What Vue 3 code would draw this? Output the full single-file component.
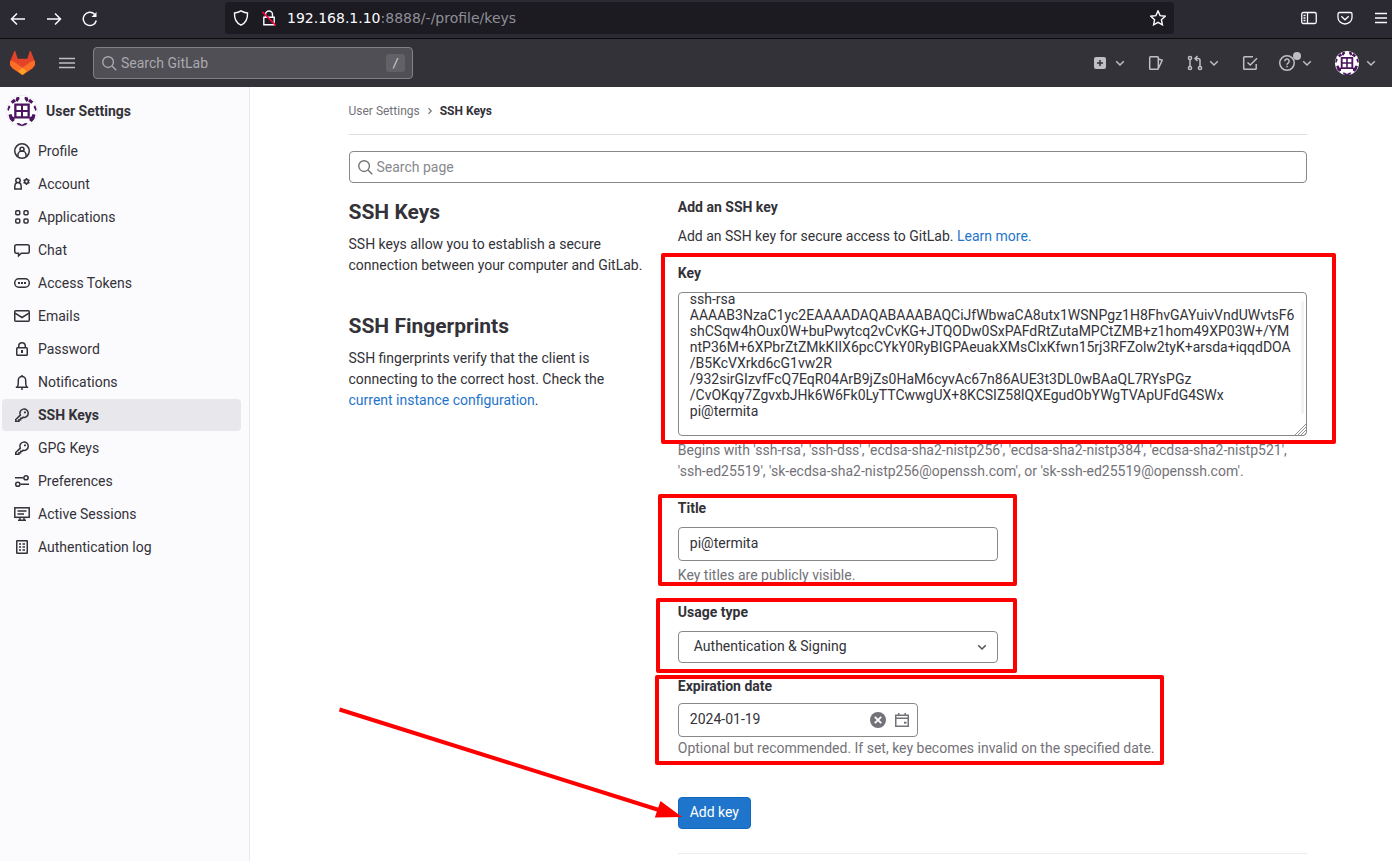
<script setup>
const items = [
  { label: 'Profile', icon: '<circle cx="8" cy="8" r="7.25"/><circle cx="8" cy="6.2" r="2"/><path d="M3.9 13.6V12.200a4.100 4.100 0 0 1 8.200 0v1.400"/>' },
  { label: 'Account', icon: '<circle cx="4" cy="4.500" r="2.200"/><path d="M2.900 6.500C1.300 7.400.8 8.700.8 10.200v2.900h6.400v-2.900c0-1.500-.5-2.800-2.100-3.700"/><circle cx="12.500" cy="5.500" r="1.900"/><path stroke-width="1.500" d="M12.500 2v1.500m0 4V9M9.500 3.800l1.400.8m3.200 1.800 1.400.8M9.500 7.200l1.400-.8m3.200-1.800 1.400-.8"/>' },
  { label: 'Applications', icon: '<rect x="1.750" y="1.750" width="4" height="4" rx="1"/><rect x="10" y="1.750" width="4" height="4" rx="1"/><rect x="1.750" y="9.900" width="4" height="4" rx="1"/><rect x="10" y="9.900" width="4" height="4" rx="1"/>' },
  { label: 'Chat', icon: '<path d="M2.500 2.750h11a1.750 1.750 0 0 1 1.750 1.750v5a1.750 1.750 0 0 1-1.750 1.750H7.300L4.500 13.800v-2.550h-2A1.750 1.750 0 0 1 .75 9.500v-5A1.750 1.750 0 0 1 2.500 2.750z"/>' },
  { label: 'Access Tokens', icon: '<rect x=".75" y="3.750" width="14.500" height="8.500" rx="4"/><path stroke-width="2" d="M4 8h2M7 8h2M10 8h2"/>' },
  { label: 'Emails', icon: '<rect x=".75" y="2.750" width="14.500" height="10.500" rx="1"/><path d="m1 5.200 7 4.300 7-4.300"/>' },
  { label: 'Password', icon: '<rect x="2.750" y="6.750" width="10.500" height="7.500" rx=".8"/><path d="M4.750 6.500V5a3.250 3.250 0 0 1 6.500 0v1.500"/><path stroke-width="2" d="M8 9v3"/>' },
  { label: 'Notifications', icon: '<path d="M1.800 13.250h12.400M3.300 13c.8-1 1-2.400 1-4.500V6.200a3.700 3.700 0 0 1 7.400 0v2.300c0 2.100.2 3.500 1 4.500"/><path d="M8 1v1.500M7 15h2"/>' },
  { label: 'SSH Keys', icon: 'key', active: true },
  { label: 'GPG Keys', icon: 'key' },
  { label: 'Preferences', icon: '<path d="M1 4.750h8.500M14.500 4.750H14M15 11.250H6.500"/><circle cx="12" cy="4.750" r="2.100"/><circle cx="3.800" cy="11.250" r="2.100"/>' },
  { label: 'Active Sessions', icon: '<rect x=".8" y="1.800" width="14.400" height="9.500"/><path d="M3.500 5h9M3.500 8h6.500M6 11.500V14M10 11.500V14M4 14.250h8"/>' },
  { label: 'Authentication log', icon: '<rect x="2.750" y="1.750" width="10.500" height="12.500" rx=".5"/><path d="M5 5h2M8.500 5h2.500M5 8h2M8.500 8h2.500M5 11h2M8.500 11h2.500"/>' },
]
const keyIcon = '<path d="M6.300 8.100 1.750 12.500v1.750h3.200v-1.500h1.700v-1.600h1.500l.7-.9a4.200 4.200 0 1 0-2.550-2.150z"/><path stroke-width="1.800" d="M10 5.300h1.900"/>'
const art = '<circle cx="15" cy="15" r="15" fill="#fff"/><g fill="#4b1560"><path fill-rule="evenodd" d="M7.200 7.500h15.600v15H7.200zM9.500 9.700v4.300h4.500V9.700zM16 9.700v4.300h4.500V9.700zM9.500 16v4.300h4.500V16zM16 16v4.300h4.500V16z"/><path d="M3.700 5.500 7 2.800l2 2.700-3.500 2.200zM9.200 1.500l3-.8.3 2.300-2.200 3-1.800-1.700zM26.300 5.500 23 2.800l-2 2.700 3.500 2.200zM20.800 1.500l-3-.8-.3 2.300 2.200 3 1.800-1.700zM.2 13.200l1.600-4 1.700 1.600-2.200 4.500zM29.800 13.200l-1.600-4-1.700 1.600 2.200 4.500zM1.500 18.700l3-.7 1 2.500 2.200.8-.2 3.300-2.300 1.300-2.600-3zM28.500 18.700l-3-.7-1 2.500-2.200.8.2 3.300 2.300 1.300 2.600-3zM9.500 27l3 .2 2.500 1.500 2.500-1.500 3-.2-1.500 2.300-2.500.6h-3l-2.500-.6z"/></g>'
const keyText = `ssh-rsa
AAAAB3NzaC1yc2EAAAADAQABAAABAQCiJfWbwaCA8utx1WSNPgz1H8FhvGAYuivVndUWvtsF6
shCSqw4hOux0W+buPwytcq2vCvKG+JTQODw0SxPAFdRtZutaMPCtZMB+z1hom49XP03W+/YM
ntP36M+6XPbrZtZMkKIIX6pcCYkY0RyBIGPAeuakXMsClxKfwn15rj3RFZolw2tyK+arsda+iqqdDOA
/B5KcVXrkd6cG1vw2R
/932sirGIzvfFcQ7EqR04ArB9jZs0HaM6cyvAc67n86AUE3t3DL0wBAaQL7RYsPGz
/CvOKqy7ZgvxbJHk6W6Fk0LyTTCwwgUX+8KCSIZ58lQXEgudObYWgTVApUFdG4SWx
pi@termita`
</script>

<template>
  <div class="page">
    <div class="browser">
      <svg class="nav-ic" viewBox="0 0 16 16"><path d="M15 8H1.500M7 2.500 1.500 8 7 13.500" /></svg>
      <svg class="nav-ic" viewBox="0 0 16 16"><path d="M1 8h13.500M9 2.500 14.500 8 9 13.500" /></svg>
      <svg class="nav-ic" viewBox="0 0 16 16"><path d="M14.300 9.500A6.600 6.600 0 1 1 12.600 3.300" /><path d="M14.500 1v5h-5z" fill="#fbfbfe" stroke="none" /></svg>
      <div class="url">
        <svg viewBox="0 0 16 16"><path d="M8 .9c2.300 1.500 4.300 1.900 6.500 2.100.3 5-1 9.500-6.500 12.200C2.500 12.500 1.200 8 1.500 3 3.700 2.800 5.700 2.400 8 .9z" /></svg>
        <svg viewBox="0 0 16 16"><path d="M4.500 7V4.500a3.500 3.500 0 0 1 7 0V7M2.800 7.300h10.400v7.400H2.800z" /><path d="m1.200 1.800 13.600 13.600" stroke="#ff0039" stroke-width="1.600" /></svg>
        <span class="addr"><b>192.168.1.10</b>:8888/-/profile/keys</span>
        <svg class="star" viewBox="0 0 16 16"><path d="m8 .9 2.100 4.700 5.100.6-3.800 3.500 1 5.100L8 12.300l-4.400 2.500 1-5.100L.8 6.200l5.100-.6z" /></svg>
      </div>
      <div class="tools">
        <svg viewBox="0 0 16 16"><rect x=".75" y="2.500" width="14.500" height="11" rx="1.500" /><path d="M6.500 2.500v11M2.500 5.500h2M2.500 8h2M2.500 10.500h2" /></svg>
        <svg viewBox="0 0 16 16"><path d="M2.500 2.500h11a1.500 1.500 0 0 1 1.500 1.500v3.500a7 6.500 0 0 1-14 0V4a1.500 1.500 0 0 1 1.500-1.500zM4.300 6.300 8 9.800l3.700-3.500" /></svg>
        <svg viewBox="0 0 16 16"><path d="M2 3.500h12M2 8h12M2 12.500h12" /></svg>
      </div>
    </div>

    <header class="top">
      <svg class="fox" viewBox="0 0 25 24"><path fill="#e24329" d="m24.500 9.500-3.700-9.200c-.3-.5-1-.5-1.200.1l-2.300 7.300H7.700L5.400.4C5.200-.2 4.500-.2 4.200.3L.5 9.500a6.900 6.900 0 0 0 2.300 8l9.700 6.500 9.700-6.500a6.900 6.900 0 0 0 2.300-8z" /><path fill="#fc6d26" d="M24.500 9.500c-2 .4-4 1.300-5.500 2.500l-6.500 4.800L6 12C4.500 10.800 2.500 9.900.5 9.500a6.900 6.900 0 0 0 2.300 8l9.700 6.500 9.700-6.500a6.900 6.900 0 0 0 2.300-8z" /><path fill="#fca326" d="m8.200 20.300 4.300 3.700 4.300-3.700-4.300-3.500z" /></svg>
      <svg class="burger" viewBox="0 0 16 16"><path d="M0 3.500h16M0 8h16M0 12.500h16" /></svg>
      <div class="search">
        <svg viewBox="0 0 16 16"><circle cx="6.500" cy="6.500" r="5.700" /><path d="m10.700 10.700 4.500 4.500" /></svg>
        <span>Search GitLab</span><kbd>/</kbd>
      </div>
      <div class="menus">
        <svg class="m-plus" viewBox="0 0 16 16"><rect x="2" y="2" width="12" height="12" rx="2" fill="#bfbfc3" stroke="none" /><path d="M8 5v6M5 8h6" stroke="#333238" /></svg>
        <svg class="chev" viewBox="0 0 16 16"><path d="m4.200 6.300 3.800 3.700 3.800-3.700" /></svg>
        <svg class="m-issue" viewBox="0 0 16 16"><path d="M2.500 1.750h7a.8.8 0 0 1 .8.8v10.900a.8.8 0 0 1-.8.8h-7a.8.8 0 0 1-.8-.8V2.550a.8.8 0 0 1 .8-.8zM10.500 4l3.700 1.300-3.700 8" /></svg>
        <svg class="m-mr" viewBox="0 0 16 16"><circle cx="3" cy="3" r="1.600" /><circle cx="3" cy="13" r="1.600" /><circle cx="13" cy="13" r="1.600" /><path d="M3 4.800v6.400M13 11.200V5.500a2 2 0 0 0-2-2H8.500M10.500 1 8 3.500 10.500 6" /></svg>
        <svg class="chev" viewBox="0 0 16 16"><path d="m4.200 6.300 3.800 3.700 3.800-3.700" /></svg>
        <svg class="m-todo" viewBox="0 0 16 16"><path d="M11 1.750H2.500a.8.8 0 0 0-.8.8v10.900a.8.8 0 0 0 .8.8h10.900a.8.8 0 0 0 .8-.8V9M5.500 7.500 8.300 10l6.700-6.700" /></svg>
        <div class="help">
          <svg viewBox="0 0 16 16"><circle cx="8" cy="8" r="7.250" /><path d="M5.800 6.200a2.200 2.200 0 1 1 3.300 1.900c-.7.400-1.100.7-1.100 1.600" /><path d="M8 10.800v1.500" /></svg><i></i>
        </div>
        <svg class="chev c3" viewBox="0 0 16 16"><path d="m4.200 6.300 3.800 3.700 3.800-3.700" /></svg>
        <svg class="me" viewBox="0 0 30 30" v-html="art"></svg>
        <svg class="chev c4" viewBox="0 0 16 16"><path d="m4.200 6.300 3.800 3.700 3.800-3.700" /></svg>
      </div>
    </header>

    <div class="body">
      <aside>
        <div class="ctx"><svg viewBox="0 0 30 30" v-html="art"></svg><b>User Settings</b></div>
        <a v-for="it in items" :key="it.label" :class="['item', { active: it.active }]">
          <svg viewBox="0 0 16 16" v-html="it.icon === 'key' ? keyIcon : it.icon"></svg>{{ it.label }}
        </a>
      </aside>

      <main>
        <nav class="crumbs">User Settings<svg viewBox="0 0 8 8"><path d="m2.500 1.200 2.700 2.800-2.700 2.800" /></svg><b>SSH Keys</b></nav>
        <div class="page-search">
          <svg viewBox="0 0 16 16"><circle cx="6.500" cy="6.500" r="5.700" /><path d="m10.700 10.700 4.500 4.500" /></svg>Search page
        </div>
        <div class="cols">
          <section class="about">
            <h4>SSH Keys</h4>
            <p>SSH keys allow you to establish a secure connection between your computer and GitLab.</p>
            <h4 class="second">SSH Fingerprints</h4>
            <p>SSH fingerprints verify that the client is connecting to the correct host. Check the <a>current instance configuration</a>.</p>
          </section>
          <section class="form">
            <b class="title">Add an SSH key</b>
            <p class="intro">Add an SSH key for secure access to GitLab. <a>Learn more.</a></p>
            <label class="l-key">Key</label>
            <div class="area"><pre>{{ keyText }}</pre><span class="bar"></span>
              <svg class="grip" viewBox="0 0 11 11"><path d="M0 11 11 0M3 11l8-8M6 11l5-5M9 11l2-2" /></svg>
            </div>
            <p class="hint key-hint">Begins with 'ssh-rsa', 'ssh-dss', 'ecdsa-sha2-nistp256', 'ecdsa-sha2-nistp384', 'ecdsa-sha2-nistp521', 'ssh-ed25519', 'sk-ecdsa-sha2-nistp256@openssh.com', or 'sk-ssh-ed25519@openssh.com'.</p>
            <label class="l-title">Title</label>
            <div class="field">pi@termita</div>
            <p class="hint title-hint">Key titles are publicly visible.</p>
            <label class="l-usage">Usage type</label>
            <div class="field select">Authentication &amp; Signing<svg viewBox="0 0 16 16"><path d="m4.200 6.300 3.800 3.700 3.800-3.700" /></svg></div>
            <label class="l-date">Expiration date</label>
            <div class="field date"><span>2024-01-19</span>
              <svg viewBox="0 0 16 16"><circle cx="8" cy="8" r="8" fill="#737278" stroke="none" /><path d="m4.800 4.800 6.400 6.400M11.200 4.800l-6.400 6.400" stroke="#fff" stroke-width="1.900" /></svg>
              <svg viewBox="0 0 16 16"><path d="M1.750 3.250h12.500v11H1.750zM1.750 6.250h12.500M4.750 1v2.500M11.250 1v2.500" /><path d="M10 10.700h2.500" stroke-width="2" /></svg>
            </div>
            <p class="hint date-hint">Optional but recommended. If set, key becomes invalid on the specified date.</p>
            <button>Add key</button>
            <div class="rule"></div>
          </section>
        </div>
      </main>
    </div>

    <svg class="notes" viewBox="0 0 1392 861">
      <g fill="none" stroke="#f00" stroke-width="4" stroke-linejoin="round">
        <rect x="663" y="255" width="671" height="187" />
        <rect x="660" y="496" width="355" height="88" />
        <rect x="658" y="600" width="357" height="71" />
        <rect x="657" y="677" width="505" height="86" />
        <path d="m339.500 709.500 321 101" />
      </g>
      <path fill="#f00" d="m660.500 801 21.500 16-27.200.6z" />
    </svg>
  </div>
</template>

<style>
body { margin: 0; overflow: hidden; }
</style>

<style scoped>
* { box-sizing: border-box; }
.page { position: relative; width: 1392px; height: 861px; overflow: hidden; background: #fff; color: #333238; font: 14px/21px Roboto, "Noto Sans", sans-serif; }
svg { display: block; flex: none; fill: none; stroke: currentColor; stroke-width: 1.500; }
p, h4 { margin: 0; }
.browser { display: flex; align-items: center; height: 39px; padding: 0 3px 2px 10px; background: #2b2a33; border-bottom: 1px solid #0c0c0d; color: #fbfbfe; }
.nav-ic { width: 16px; height: 16px; margin: 1px 20px 0 0; }
.url { display: flex; align-items: center; width: 949px; height: 32px; margin: -1px 0 0 107px; padding: 0 8px; background: #1c1b22; border-radius: 4px; }
.url svg { width: 16px; height: 16px; margin-right: 12px; stroke-width: 1.400; }
.addr { margin-left: -2px; font: 14px/20px "DejaVu Sans", sans-serif; color: #8f8f98; }
.addr b { font-weight: 400; color: #fbfbfe; }
.url .star { margin: 0 0 0 auto; }
.tools { display: flex; gap: 20px; margin-left: auto; }
.tools svg { width: 16px; height: 16px; stroke-width: 1.300; }
.top { display: flex; align-items: center; height: 48px; background: #333238; color: #bfbfc3; }
.fox { width: 25px; height: 24px; margin-left: 10px; stroke: none; }
.burger { width: 16px; height: 16px; margin: 0 0 0 24px; }
.search { display: flex; align-items: center; width: 320px; height: 32px; margin-left: 18px; padding: 0 7px 0 8px; background: #504f55; border: 1px solid #808085; border-radius: 4px; color: #a9a8ae; }
.search svg { width: 15px; height: 15px; margin-right: 4px; }
kbd { width: 19px; height: 18px; margin-left: auto; background: #626168; border-radius: 3px; font: 12px/19px "DejaVu Sans Mono", monospace; text-align: center; color: #ccc; }
.menus { display: flex; align-items: center; margin-left: auto; padding-right: 13px; }
.menus > svg, .help svg { width: 16px; height: 16px; }
.menus .chev { margin-left: 4px; }
.menus .m-issue { margin-left: 20px; }
.menus .m-mr { margin-left: 23px; }
.menus .m-mr + .chev { margin-left: 3px; }
.menus .m-todo { margin-left: 20px; }
.help { position: relative; margin-left: 21px; }
.help i { position: absolute; left: 14px; top: -3px; width: 8px; height: 8px; border-radius: 50%; background: #bfbfc3; }
.menus .me { width: 24px; height: 24px; margin-left: 20px; stroke: none; }
.body { display: flex; height: 774px; }
aside { width: 250px; padding-top: 8px; background: #fbfafd; border-right: 1px solid #e9e8ee; }
.ctx { display: flex; align-items: center; height: 32px; margin-bottom: 8px; padding-left: 7px; gap: 9px; }
.ctx svg { width: 30px; height: 30px; stroke: none; border-radius: 50%; box-shadow: 0 0 0 1px #eeedf1; }
.item { display: flex; align-items: center; width: 239px; height: 32px; margin: 0 0 1px 2px; padding-left: 12px; gap: 8px; border-radius: 4px; }
.item svg { width: 16px; height: 16px; }
.active { background: #e8e7ec; font-weight: 700; }
main { width: 958px; margin-left: 98.500px; }
.crumbs { display: flex; align-items: center; height: 48px; padding-top: 1px; border-bottom: 1px solid #dcdcde; font-size: 12px; color: #737278; }
.crumbs svg { width: 8px; height: 8px; margin: -1px 6px 0; stroke-width: 1.200; }
.crumbs b { color: #333238; font-weight: 700; }
.page-search { display: flex; align-items: center; height: 32px; margin-top: 16px; padding-left: 8px; gap: 4px; border: 1px solid #89888d; border-radius: 4px; color: #89888d; }
.page-search svg { width: 15px; height: 15px; color: #737278; }
.cols { display: flex; }
.about { flex: none; width: 329.300px; padding: 16px 30px 0 0; }
h4 { font-size: 21px; line-height: 26px; font-weight: 700; }
.about p { margin-top: 9px; }
.about .second { margin-top: 37px; }
a { color: #1f75cb; }
.item { color: #333238; }
.form { flex: none; width: 629px; padding-top: 14px; }
.form b, label { display: block; font-weight: 700; }
.intro { margin-top: 8px; }
.l-key { margin-top: 16px; }
.area { position: relative; height: 144px; margin-top: 8px; padding: 0 11px; border: 1px solid #89888d; border-radius: 4px; overflow: hidden; }
pre { margin: -2px 0 0; font: 14px/16px Roboto, sans-serif; }
.bar { position: absolute; right: 2px; top: 8px; width: 3px; height: 113px; border-radius: 2px; background: #f2f2f3; }
.grip { position: absolute; right: 0; bottom: 0; width: 11px; height: 11px; color: #777; stroke-width: .8; }
.hint { color: #737278; }
.key-hint { margin-top: 4px; }
.l-title { margin-top: 16px; }
.field { display: flex; align-items: center; width: 320px; height: 34px; margin-top: 8px; padding: 0 11px 2px; border: 1px solid #89888d; border-radius: 4px; }
.title-hint { margin-top: 4px; }
.l-usage { margin-top: 16px; }
.select { height: 32px; padding: 0 7px 2px 15px; justify-content: space-between; }
.select svg { width: 16px; height: 16px; margin-top: 2px; color: #535158; }
.l-date { margin-top: 13px; }
.date { width: 240px; margin-top: 6px; padding-right: 7px; gap: 8px; }
.date span { margin-right: auto; }
.date svg { width: 16px; height: 16px; margin-top: 2px; color: #737278; }
.date-hint { margin-top: 1px; }
button { display: block; width: 73px; height: 32px; margin-top: 38px; padding: 0 0 2px; border: 1px solid #1068bf; border-radius: 4px; background: #1f75cb; color: #fff; font: 14px/16px Roboto, sans-serif; }
.rule { margin-top: 24px; border-top: 1px solid #ececef; }
.notes { position: absolute; inset: 0; width: 1392px; height: 861px; stroke: none; pointer-events: none; }
</style>
